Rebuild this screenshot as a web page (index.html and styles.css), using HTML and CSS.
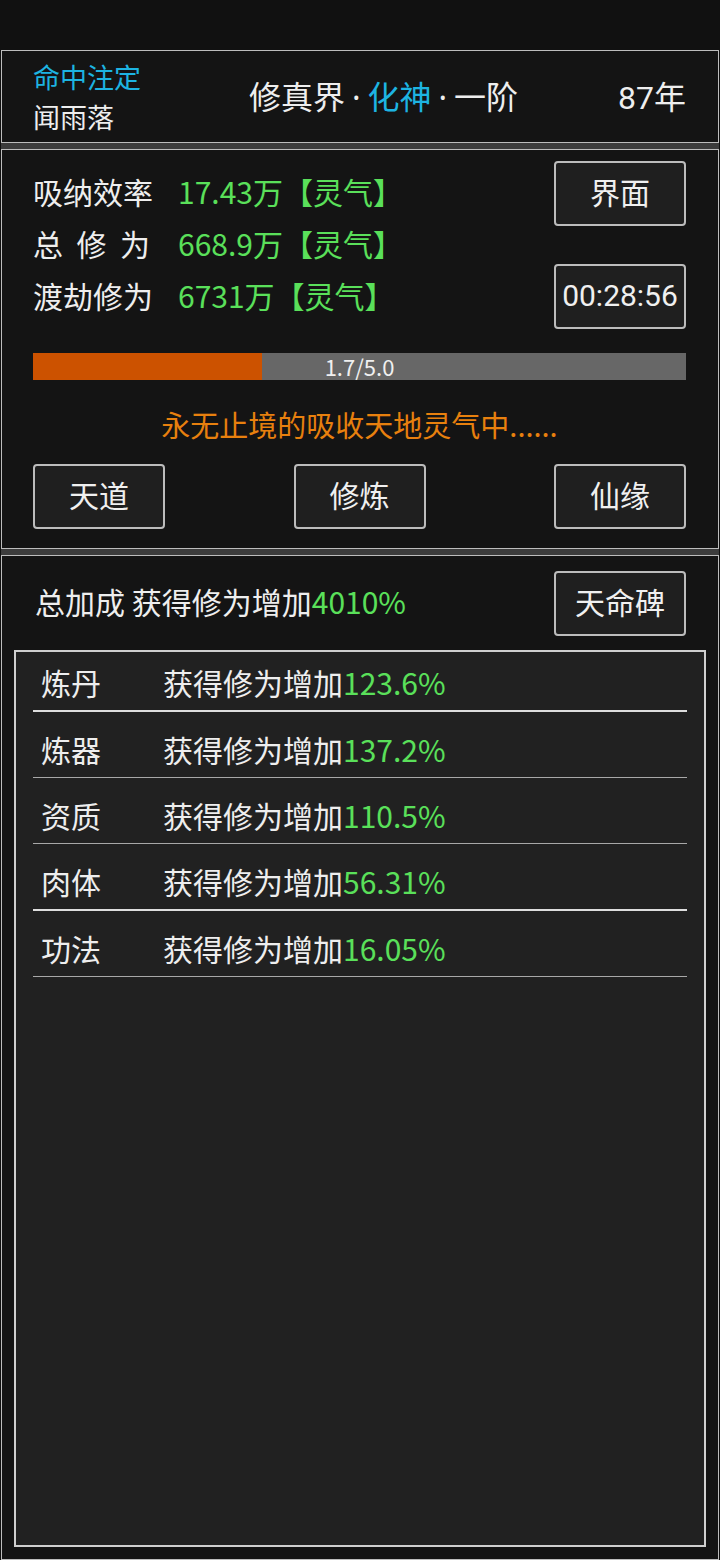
FILE: index.html
```html
<!DOCTYPE html>
<html>
<head>
    <meta charset="utf-8">
    <title>修真界</title>
    <link rel="stylesheet" href="styles.css">
</head>
<body>
    <div class="statusbar"></div>

    <!-- 角色信息 -->
    <div class="panel head">
        <div class="who">
            <div class="title">命中注定</div>
            <div class="name">闻雨落</div>
        </div>
        <div class="realm">修真界<span class="dot">·</span><span class="blue">化神</span><span class="dot">·</span>一阶</div>
        <div class="age">87年</div>
    </div>
    <div class="divider"></div>

    <!-- 修炼面板 -->
    <div class="panel main">
        <div class="top">
            <div class="stats">
                <div class="stat">
                    <span class="label">吸纳效率</span>
                    <span class="value">17.43万【灵气】</span>
                </div>
                <div class="stat">
                    <span class="label spread"><i>总</i><i>修</i><i>为</i></span>
                    <span class="value">668.9万【灵气】</span>
                </div>
                <div class="stat">
                    <span class="label">渡劫修为</span>
                    <span class="value">6731万【灵气】</span>
                </div>
            </div>
            <div class="side">
                <button class="btn">界面</button>
                <button class="btn timer">00:28:56</button>
            </div>
        </div>
        <div class="bar">
            <div class="fill" style="width: 35%;"></div>
            <span class="bar-text">1.7/5.0</span>
        </div>
        <div class="msg">永无止境的吸收天地灵气中......</div>
        <div class="actions">
            <button class="btn">天道</button>
            <button class="btn">修炼</button>
            <button class="btn">仙缘</button>
        </div>
    </div>
    <div class="divider"></div>

    <!-- 加成列表 -->
    <div class="panel bonus">
        <div class="bonus-head">
            <span class="total">总加成 获得修为增加<span class="green">4010%</span></span>
            <button class="btn">天命碑</button>
        </div>
        <div class="list" id="bonusList"></div>
    </div>

    <script>
        const bonuses = [
            { name: "炼丹", value: "123.6%", strong: true },
            { name: "炼器", value: "137.2%" },
            { name: "资质", value: "110.5%" },
            { name: "肉体", value: "56.31%", strong: true },
            { name: "功法", value: "16.05%" }
        ];

        const list = document.getElementById("bonusList");

        bonuses.forEach(item => {
            const row = document.createElement("div");
            row.className = item.strong ? "row strong" : "row";
            row.innerHTML = `
                <span class="row-name">${item.name}</span>
                <span>获得修为增加<span class="green">${item.value}</span></span>
            `;
            list.appendChild(row);
        });
    </script>
</body>
</html>
```

FILE: styles.css
```css
body {
    margin: 0;
    height: 1560px;
    background-color: #101010;
    color: #eeeeee;
    font-family: "Noto Sans CJK SC", "Noto Sans", sans-serif;
    overflow: hidden;
}

.statusbar {
    height: 50px;
    background-color: #111111;
}

.panel {
    margin: 0 1px;
    border: 1px solid #bdbdbd;
    background-color: #141414;
    box-sizing: border-box;
}

.divider {
    height: 6px;
    margin: 0 1px;
    background-color: #3c3c3c;
}

button {
    font-family: inherit;
}

.btn {
    width: 132px;
    height: 65px;
    padding: 0 0 5px 0;
    border: 2px solid #bcbcbc;
    border-radius: 4px;
    background-color: #1f1f1f;
    color: #f0f0f0;
    font-size: 30px;
    line-height: 1;
}

.green {
    color: #5ae05a;
}

/* top panel */
.head {
    height: 93px;
    display: flex;
    align-items: center;
    justify-content: space-between;
    padding: 0 32px 0 31px;
}

.who {
    font-size: 27px;
    line-height: 40px;
}

.title {
    color: #1db4e2;
}

.realm {
    font-size: 32px;
    padding: 0 0 4px 8px;
}

.realm .dot {
    font-family: "Noto Sans", sans-serif;
    margin: 0 7px;
}

.blue {
    color: #1db4e2;
}

.age {
    font-family: Roboto, "Noto Sans CJK SC", sans-serif;
    font-size: 32px;
    padding-bottom: 4px;
}

/* main panel */
.main {
    height: 400px;
    padding: 0 32px 0 31px;
}

.top {
    display: flex;
    justify-content: space-between;
}

.stats {
    padding-top: 15px;
}

.stat {
    display: flex;
    height: 52px;
    line-height: 52px;
    font-size: 30px;
}

.label {
    width: 145px;
    color: #eeeeee;
}

.label.spread {
    display: flex;
    justify-content: space-between;
    width: 117px;
    margin-right: 28px;
}

.label.spread i {
    font-style: normal;
}

.value {
    color: #5ae05a;
}

.side {
    display: flex;
    flex-direction: column;
    gap: 38px;
    padding-top: 11px;
}

.timer {
    font-family: Roboto, sans-serif;
    font-size: 30px;
    padding-bottom: 2px;
}

.bar {
    position: relative;
    height: 27px;
    margin-top: 24px;
    background-color: #676767;
}

.fill {
    height: 100%;
    background-color: #cc5200;
}

.bar-text {
    position: absolute;
    left: 0;
    right: 0;
    top: 0;
    text-align: center;
    font-size: 22px;
    line-height: 27px;
    color: #f0f0f0;
}

.msg {
    margin-top: 24px;
    height: 40px;
    line-height: 40px;
    text-align: center;
    color: #e8800e;
    font-size: 29px;
}

.actions {
    display: flex;
    justify-content: space-between;
    margin-top: 20px;
}

/* bonus panel */
.bonus {
    height: 1005px;
    display: flex;
    flex-direction: column;
}

.bonus-head {
    display: flex;
    align-items: center;
    justify-content: space-between;
    padding: 15px 32px 0 33px;
    font-size: 30px;
}

.total {
    padding-bottom: 5px;
}

.list {
    flex: 1;
    margin: 14px 12px 12px 12px;
    border: 2px solid #cfcfcf;
    background-color: #212121;
}

.row {
    display: flex;
    height: 40px;
    margin: 0 17px;
    padding: 17px 0 8px 8px;
    line-height: 40px;
    font-size: 30px;
    border-bottom: 1px solid #a8a8a8;
}

.row:first-child {
    padding-top: 10px;
}

.row.strong {
    border-bottom: 2px solid #dedede;
}

.row-name {
    width: 122px;
}
```
